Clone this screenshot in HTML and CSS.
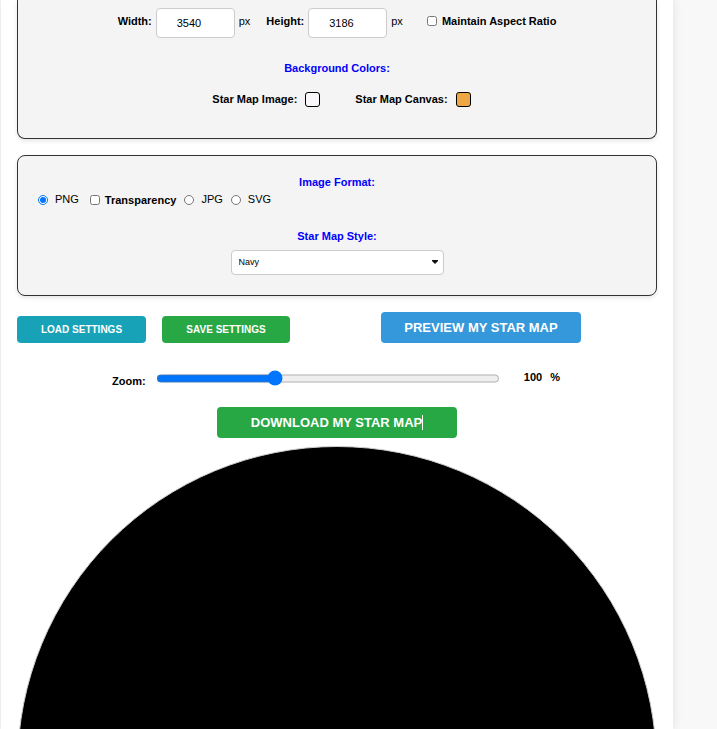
FILE: index.html
```html
<!DOCTYPE html>
<html lang="en">
<head>
<meta charset="utf-8">
<title>Star Map</title>
<link rel="stylesheet" href="styles.css">
</head>
<body>
<main class="page">
  <section class="panel panel-size">
    <div class="row size-row">
      <label class="strong" for="width">Width:</label>
      <input class="number" id="width" type="text" value="3540">
      <span class="unit">px</span>
      <label class="strong" for="height">Height:</label>
      <input class="number" id="height" type="text" value="3186">
      <span class="unit unit-last">px</span>
      <input class="check" id="ratio" type="checkbox">
      <label class="strong" for="ratio">Maintain Aspect Ratio</label>
    </div>
    <h2 class="heading">Background Colors:</h2>
    <div class="row color-row">
      <div class="color-field">
        <label class="strong" for="image-color">Star Map Image:</label>
        <button class="swatch" id="image-color" type="button"></button>
      </div>
      <div class="color-field">
        <label class="strong" for="canvas-color">Star Map Canvas:</label>
        <button class="swatch swatch-orange" id="canvas-color" type="button"></button>
      </div>
    </div>
  </section>

  <section class="panel panel-format">
    <h2 class="heading">Image Format:</h2>
    <div class="row format-row">
      <input class="radio" id="png" type="radio" name="format" checked>
      <label class="format" for="png">PNG</label>
      <input class="check check-alpha" id="alpha" type="checkbox">
      <label class="strong" for="alpha">Transparency</label>
      <input class="radio radio-next" id="jpg" type="radio" name="format">
      <label class="format" for="jpg">JPG</label>
      <input class="radio radio-next" id="svg" type="radio" name="format">
      <label class="format" for="svg">SVG</label>
    </div>
    <h2 class="heading"><label for="style">Star Map Style:</label></h2>
    <div class="select-box">
      <select class="select" id="style"><option>Navy</option></select>
      <svg class="arrow" viewBox="0 0 6 4" aria-hidden="true"><path d="M0 0h6v1L3 4 0 1z" fill="#111"/></svg>
    </div>
  </section>

  <div class="actions">
    <button class="button load" type="button">LOAD SETTINGS</button>
    <button class="button save" type="button">SAVE SETTINGS</button>
    <button class="button large preview" type="button">PREVIEW MY STAR MAP</button>
  </div>

  <div class="zoom">
    <label class="strong zoom-label" for="zoom">Zoom:</label>
    <input class="slider" id="zoom" type="range" min="10" max="275" value="100">
    <output class="strong percent" for="zoom"><span>100</span><span>%</span></output>
  </div>

  <button class="button large download" type="button">DOWNLOAD MY STAR MAP<span class="caret"></span></button>
  <div class="map"></div>
</main>
</body>
</html>
```
FILE: styles.css
```css
* { box-sizing: border-box; }

body {
  margin: 0;
  height: 100vh;
  overflow: hidden;
  background: #f8f8f8;
  color: #000;
  font: 11px/16px "Liberation Sans", Arial, sans-serif;
}

.page {
  margin: 0 44px 0 1px;
  height: 100%;
  overflow: hidden;
  padding: 0 16px;
  background: #fff;
  box-shadow: 0 0 10px rgba(0, 0, 0, 0.1);
}

input, button, select { margin: 0; font-family: inherit; color: inherit; }

.panel {
  border: 1px solid #333;
  border-radius: 8px;
  background: #f4f4f4;
  box-shadow: 0 2px 4px rgba(0, 0, 0, 0.1);
}

.panel-size {
  padding: 8px 20px 31px;
  border-top: 0;
  border-top-left-radius: 0;
  border-top-right-radius: 0;
}

.panel-format {
  margin-top: 16px;
  padding: 18px 20px 20px;
}

.row { display: flex; align-items: center; }
.strong { font-weight: bold; }

.heading {
  margin: 0;
  color: #00f;
  font-size: 11px;
  line-height: 16px;
  text-align: center;
}

.size-row { justify-content: center; margin-bottom: 22px; }
.size-row label, .size-row .unit, .size-row .check { margin-bottom: 4px; }

.number {
  width: 79px;
  height: 30px;
  margin: 0 4px;
  padding: 0 20px;
  border: 1px solid #ccc;
  border-radius: 4px;
  background: #fff;
  font-size: 11px;
}

.unit { margin-right: 16px; }
.unit-last { margin-right: 24px; }

.check { width: 10px; height: 10px; margin-right: 5px; }

.color-row { justify-content: center; gap: 35px; margin-top: 15px; padding-left: 9px; }
.color-field { display: flex; align-items: center; gap: 8px; }

.swatch {
  width: 15px;
  height: 15px;
  padding: 0;
  border: 1px solid #000;
  border-radius: 3px;
  background: #f9f7f9;
}

.swatch-orange { background: #eea745; }

.format-row { height: 16px; margin: 2px 0 20px; }
.format { padding-bottom: 2px; }
.radio { width: 10px; height: 10px; margin-right: 7px; }
.radio-next { margin-left: 8px; }
.check-alpha { margin-left: 11px; }

.select-box { position: relative; width: 213px; margin: 6px auto 0; }

.select {
  display: block;
  width: 100%;
  height: 25px;
  padding: 0 7px 2px;
  appearance: none;
  border: 1px solid #ccc;
  border-radius: 4px;
  background: #fff;
  font-size: 9px;
}

.arrow { position: absolute; top: 10px; right: 6px; width: 6px; height: 4px; }

.actions { display: flex; align-items: flex-end; margin-top: 16px; }

.button {
  height: 27px;
  padding: 0;
  border: 0;
  border-radius: 4px;
  color: #fff;
  font-size: 10px;
  font-weight: bold;
}

.load { width: 129px; background: #17a2b8; }
.save { width: 128px; margin-left: 16px; background: #28a745; }
.large { height: 31px; font-size: 13px; }
.preview { width: 200px; margin: 0 76px 0 auto; background: #3498db; }

.zoom { display: flex; align-items: center; height: 16px; margin: 27px 97px 0 95px; }
.zoom-label { padding-top: 6px; }
.slider { flex: 1; min-width: 0; height: 11px; margin: 0 24px 0 10px; accent-color: #0075ff; }
.percent { display: flex; gap: 8px; padding-bottom: 2px; }

.download {
  display: flex;
  align-items: center;
  justify-content: center;
  width: 240px;
  margin: 21px auto 0;
  background: #28a745;
}

.caret { width: 1px; height: 15px; background: #fff; }

.map {
  margin-top: 8px;
  aspect-ratio: 1;
  border: 1px solid #ccc;
  border-radius: 50%;
  background: #000;
}
```
